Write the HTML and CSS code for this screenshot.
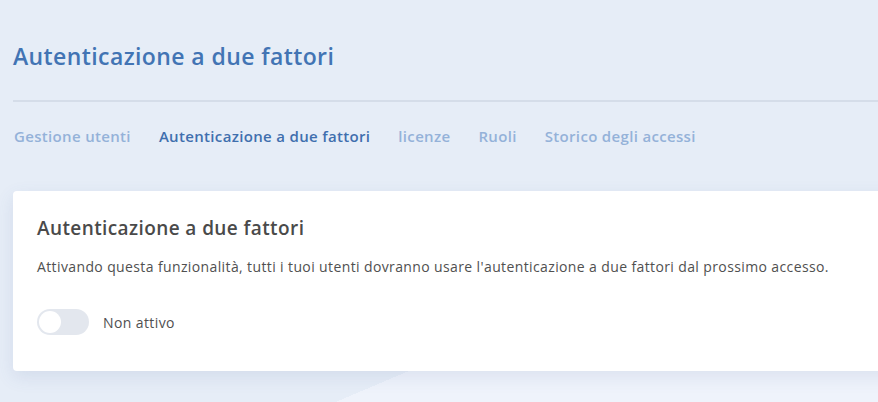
FILE: index.html
```html
<!DOCTYPE html>
<html lang="it">
<head>
    <meta charset="UTF-8">
    <meta name="viewport" content="width=device-width, initial-scale=1.0">
    <title>Autenticazione a due fattori</title>
    <link rel="stylesheet" href="styles.css">
</head>
<body>
    <div class="page">
        <h1 class="page-title">Autenticazione a due fattori</h1>
        <ul class="tabs">
            <li><a href="javascript:;">Gestione utenti</a></li>
            <li><a href="javascript:;" class="active">Autenticazione a due fattori</a></li>
            <li><a href="javascript:;">licenze</a></li>
            <li><a href="javascript:;">Ruoli</a></li>
            <li><a href="javascript:;">Storico degli accessi</a></li>
        </ul>
        <div class="card">
            <h2 class="card-title">Autenticazione a due fattori</h2>
            <p class="card-text">Attivando questa funzionalità, tutti i tuoi utenti dovranno usare l'autenticazione a due fattori dal prossimo accesso.</p>
            <label class="switch-row">
                <span class="switch"><span class="knob"></span></span>
                <span class="switch-label">Non attivo</span>
            </label>
        </div>
    </div>
</body>
</html>
```

FILE: styles.css
```css
* {
    margin: 0;
    padding: 0;
    box-sizing: border-box;
}
html {
    height: 100%;
    background: #e6edf7 linear-gradient(157deg, #e6edf7 168px, #eff3fb 168px) left bottom no-repeat;
    background-size: 100% 40px;
}
body {
    height: 100%;
    overflow: hidden;
    font-family: "Open Sans", "Noto Sans", sans-serif;
}
.page {
    width: 920px;
    padding: 40px 0 0 13px;
}
.page-title {
    font-size: 23px;
    font-weight: 600;
    letter-spacing: 0.4px;
    color: #4274b4;
    line-height: 32px;
    padding-bottom: 28px;
    border-bottom: 2px solid #d5dde9;
}
.tabs {
    list-style: none;
    display: flex;
    gap: 28px;
    padding: 23px 0 0 1px;
    height: 89px;
}
.tabs a {
    text-decoration: none;
    font-size: 15px;
    font-weight: 600;
    letter-spacing: 0.33px;
    line-height: 22px;
    color: #94b2d9;
}
.tabs a.active {
    color: #3f6fae;
}
.card {
    background: #fff;
    border-radius: 4px;
    box-shadow: 0 6px 18px rgba(70, 100, 160, 0.12);
    padding: 24px 24px 30px;
    height: 180px;
}
.card-title {
    font-size: 19px;
    font-weight: 600;
    letter-spacing: 0.4px;
    color: #4a4a4a;
    line-height: 26px;
}
.card-text {
    margin-top: 16px;
    font-size: 14px;
    letter-spacing: 0.38px;
    color: #505050;
    line-height: 20px;
}
.switch-row {
    display: flex;
    align-items: center;
    gap: 14px;
    margin-top: 32px;
}
.switch {
    display: flex;
    align-items: center;
    width: 52px;
    height: 26px;
    border-radius: 13px;
    background: #e3e7ee;
    padding: 2px;
}
.knob {
    width: 22px;
    height: 22px;
    border-radius: 50%;
    background: #fff;
}
.switch-label {
    font-size: 14px;
    letter-spacing: 0.4px;
    color: #505050;
}
```
